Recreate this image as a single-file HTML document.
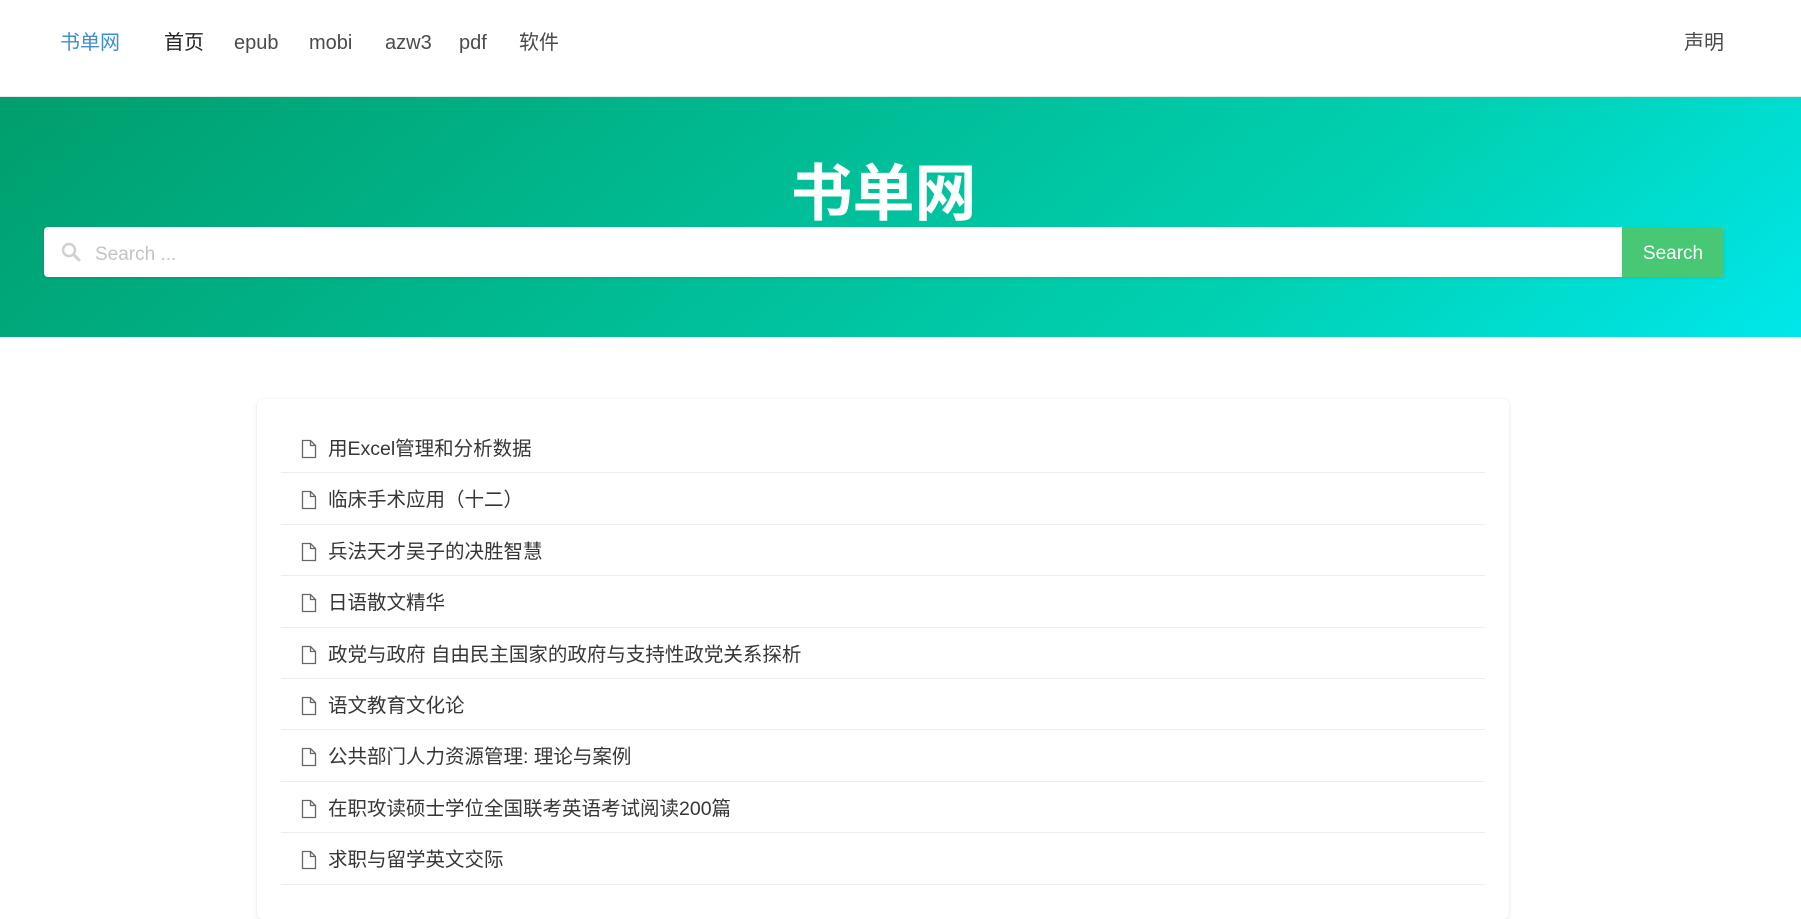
<!DOCTYPE html>
<html><head><meta charset="utf-8"><style>
*{box-sizing:border-box;margin:0;padding:0}
body{width:1801px;height:869px;overflow:hidden;background:#fff;font-family:"Liberation Sans","Noto Sans CJK SC",sans-serif;color:#4a4a4a}
.nav{height:97px;position:relative;border-bottom:1px solid #e8e8e8;box-shadow:0 1px 2px rgba(0,0,0,.05)}
.nav a{position:absolute;top:29px;font-size:20px;line-height:28px;color:#4a4a4a;text-decoration:none}
.hero{height:240px;background:linear-gradient(141deg,#009e6c 0%,#00d1b2 71%,#00e7eb 100%);position:relative}
.hero h1{position:absolute;left:-34px;right:0;text-align:center;color:#fff;font-size:62px;font-weight:bold;line-height:70px;top:63px}
.search{position:absolute;left:44px;top:130px;width:1680px;height:50px;background:#fff;border-radius:4px;box-shadow:0 1px 3px rgba(0,0,0,.1)}
.search .ph{position:absolute;left:51px;top:17px;font-size:19px;color:#c4c4c4}
.search .btn{position:absolute;right:0;top:0;width:102px;height:50px;background:#48c774;color:#fff;font-size:19px;line-height:54px;text-align:center;border-radius:0 4px 4px 0}
.card{position:absolute;left:257px;top:399px;width:1252px;height:520px;background:#fff;border-radius:6px;box-shadow:0 2px 6px rgba(10,10,10,.08),0 0 0 1px rgba(10,10,10,.02);padding:23px 24px}
.item{height:51.4px;border-bottom:1px solid #ededed;position:relative;font-size:19.5px;line-height:55px;padding-left:47px;color:#363636}
.item svg{position:absolute;left:20px;top:17px}
</style></head><body>
<div class="nav">
<a style="left:60px;color:#3e8ed0">书单网</a>
<a style="left:164px;color:#222">首页</a>
<a style="left:234px">epub</a>
<a style="left:309px">mobi</a>
<a style="left:385px">azw3</a>
<a style="left:459px">pdf</a>
<a style="left:519px">软件</a>
<a style="left:1684px">声明</a>
</div>
<div class="hero">
<h1>书单网</h1>
<div class="search">
<svg style="position:absolute;left:17px;top:15px" width="20" height="20" viewBox="0 0 20 20"><circle cx="8" cy="8" r="6" fill="none" stroke="#d0d0d0" stroke-width="2.5"/><line x1="12.5" y1="12.5" x2="18" y2="18" stroke="#d0d0d0" stroke-width="3" stroke-linecap="round"/></svg>
<span class="ph">Search ...</span>
<div class="btn">Search</div>
</div>
</div>
<div class="card">
<div class="item"><svg width="16" height="20" viewBox="0 0 16 20"><path d="M1.5 1.5h8l5 5v12h-13z M9.5 1.5v5h5" fill="none" stroke="#666" stroke-width="1.3"/></svg>用Excel管理和分析数据</div>
<div class="item"><svg width="16" height="20" viewBox="0 0 16 20"><path d="M1.5 1.5h8l5 5v12h-13z M9.5 1.5v5h5" fill="none" stroke="#666" stroke-width="1.3"/></svg>临床手术应用（十二）</div>
<div class="item"><svg width="16" height="20" viewBox="0 0 16 20"><path d="M1.5 1.5h8l5 5v12h-13z M9.5 1.5v5h5" fill="none" stroke="#666" stroke-width="1.3"/></svg>兵法天才吴子的决胜智慧</div>
<div class="item"><svg width="16" height="20" viewBox="0 0 16 20"><path d="M1.5 1.5h8l5 5v12h-13z M9.5 1.5v5h5" fill="none" stroke="#666" stroke-width="1.3"/></svg>日语散文精华</div>
<div class="item"><svg width="16" height="20" viewBox="0 0 16 20"><path d="M1.5 1.5h8l5 5v12h-13z M9.5 1.5v5h5" fill="none" stroke="#666" stroke-width="1.3"/></svg>政党与政府 自由民主国家的政府与支持性政党关系探析</div>
<div class="item"><svg width="16" height="20" viewBox="0 0 16 20"><path d="M1.5 1.5h8l5 5v12h-13z M9.5 1.5v5h5" fill="none" stroke="#666" stroke-width="1.3"/></svg>语文教育文化论</div>
<div class="item"><svg width="16" height="20" viewBox="0 0 16 20"><path d="M1.5 1.5h8l5 5v12h-13z M9.5 1.5v5h5" fill="none" stroke="#666" stroke-width="1.3"/></svg>公共部门人力资源管理: 理论与案例</div>
<div class="item"><svg width="16" height="20" viewBox="0 0 16 20"><path d="M1.5 1.5h8l5 5v12h-13z M9.5 1.5v5h5" fill="none" stroke="#666" stroke-width="1.3"/></svg>在职攻读硕士学位全国联考英语考试阅读200篇</div>
<div class="item"><svg width="16" height="20" viewBox="0 0 16 20"><path d="M1.5 1.5h8l5 5v12h-13z M9.5 1.5v5h5" fill="none" stroke="#666" stroke-width="1.3"/></svg>求职与留学英文交际</div>
</div>
</body></html>
